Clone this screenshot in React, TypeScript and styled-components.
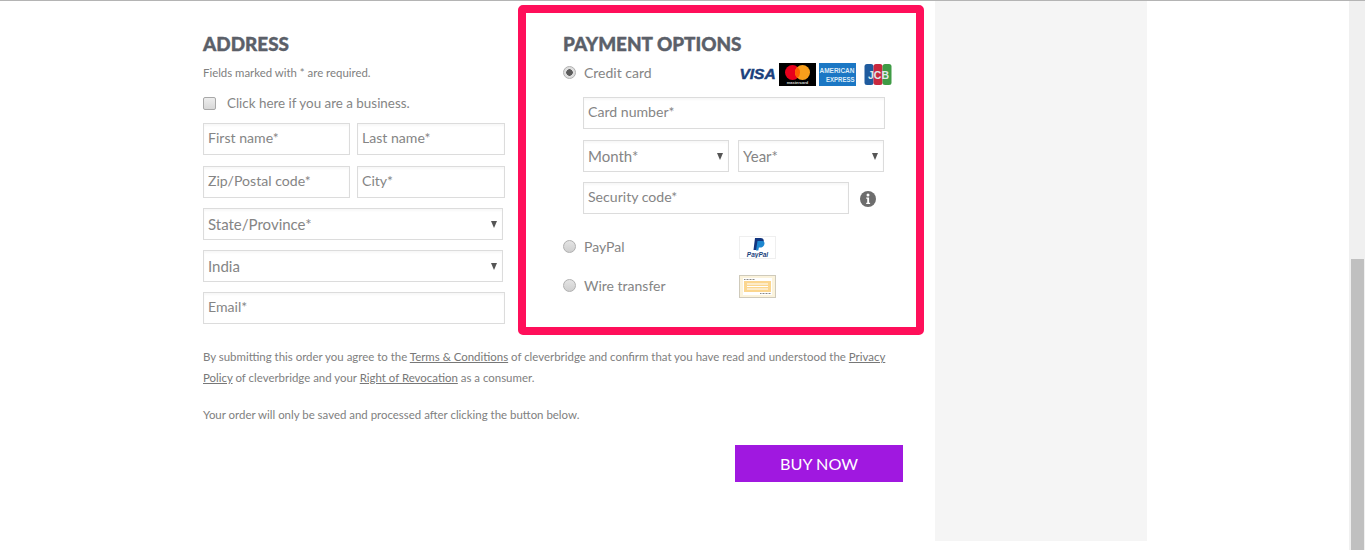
import styled, { createGlobalStyle } from "styled-components";

const GlobalStyle = createGlobalStyle`
  html, body {
    margin: 0;
    padding: 0;
    background: #fff;
    overflow: hidden;
  }
  * {
    box-sizing: border-box;
  }
`;

const App = () => {
  return (
    <>
      <GlobalStyle />
      <Page>
        <Content>
          <Main>
            <Columns>
              <AddressColumn>
                <Heading>ADDRESS</Heading>
                <Note>Fields marked with * are required.</Note>
                <BusinessRow>
                  <CheckBox />
                  <BusinessLabel>Click here if you are a business.</BusinessLabel>
                </BusinessRow>
                <Fields>
                  <FieldRow>
                    <TextField placeholder="First name*" />
                    <TextField placeholder="Last name*" />
                  </FieldRow>
                  <FieldRow>
                    <TextField placeholder="Zip/Postal code*" />
                    <TextField placeholder="City*" />
                  </FieldRow>
                  <SelectWrap width={300}>
                    <SelectField defaultValue="state">
                      <option value="state">State/Province*</option>
                    </SelectField>
                  </SelectWrap>
                  <SelectWrap width={300}>
                    <SelectField defaultValue="india">
                      <option value="india">India</option>
                    </SelectField>
                  </SelectWrap>
                  <TextField placeholder="Email*" />
                </Fields>
              </AddressColumn>

              <PaymentBox>
                <Heading>PAYMENT OPTIONS</Heading>
                <MethodRow>
                  <Radio checked />
                  <MethodLabel>Credit card</MethodLabel>
                  <CardLogos>
                    <VisaLogo />
                    <MastercardLogo />
                    <AmexLogo />
                    <JcbLogo />
                  </CardLogos>
                </MethodRow>
                <CardFields>
                  <CardNumberField placeholder="Card number*" />
                  <ExpiryRow>
                    <SelectWrap width={146}>
                      <SelectField defaultValue="month">
                        <option value="month">Month*</option>
                      </SelectField>
                    </SelectWrap>
                    <SelectWrap width={146}>
                      <SelectField defaultValue="year">
                        <option value="year">Year*</option>
                      </SelectField>
                    </SelectWrap>
                  </ExpiryRow>
                  <SecurityRow>
                    <SecurityField placeholder="Security code*" />
                    <InfoIcon />
                  </SecurityRow>
                </CardFields>
                <PayPalRow>
                  <Radio />
                  <MethodLabel>PayPal</MethodLabel>
                  <MethodLogo>
                    <PayPalLogo />
                  </MethodLogo>
                </PayPalRow>
                <WireRow>
                  <Radio />
                  <MethodLabel>Wire transfer</MethodLabel>
                  <MethodLogo>
                    <WireLogo />
                  </MethodLogo>
                </WireRow>
              </PaymentBox>
            </Columns>

            <Legal>
              By submitting this order you agree to the <LegalLink>Terms &amp; Conditions</LegalLink> of
              cleverbridge and confirm that you have read and understood the <LegalLink>Privacy Policy</LegalLink> of
              cleverbridge and your <LegalLink>Right of Revocation</LegalLink> as a consumer.
            </Legal>
            <SavedNote>Your order will only be saved and processed after clicking the button below.</SavedNote>
            <ButtonRow>
              <BuyButton>BUY NOW</BuyButton>
            </ButtonRow>
          </Main>
          <SidePanel />
        </Content>
        <ScrollTrack>
          <ScrollThumb />
        </ScrollTrack>
      </Page>
    </>
  );
};

export default App;

const VisaLogo = () => (
  <svg width="37" height="23" viewBox="0 0 37 23">
    <text
      x="18.5"
      y="16"
      textAnchor="middle"
      fontFamily="'Liberation Sans', sans-serif"
      fontWeight="700"
      fontStyle="italic"
      fontSize="15.5"
      stroke="#1a3f7c"
      strokeWidth="0.5"
      fill="#1a3f7c"
    >
      VISA
    </text>
  </svg>
);

const MastercardLogo = () => (
  <svg width="37" height="23" viewBox="0 0 37 23">
    <rect width="37" height="23" fill="#000" />
    <circle cx="13.500" cy="9.500" r="7.500" fill="#e8001c" />
    <circle cx="23.500" cy="9.500" r="7.500" fill="#f79e1b" />
    <path d="M18.500 3.900a7.500 7.500 0 0 1 0 11.200a7.500 7.500 0 0 1 0-11.200z" fill="#ff5f00" />
    <text
      x="18.500"
      y="21"
      textAnchor="middle"
      fontFamily="'Liberation Sans', sans-serif"
      fontWeight="700"
      fontSize="4"
      fill="#ddd"
    >
      mastercard
    </text>
  </svg>
);

const AmexLogo = () => (
  <svg width="37" height="23" viewBox="0 0 37 23">
    <rect width="37" height="23" fill="#1b77c4" />
    <text
      x="0.500"
      y="10"
      fontFamily="'Liberation Sans', sans-serif"
      fontWeight="700"
      fontSize="7"
      fill="#dcebf8"
      textLength="35"
      lengthAdjust="spacingAndGlyphs"
    >
      AMERICAN
    </text>
    <text
      x="7"
      y="18.500"
      fontFamily="'Liberation Sans', sans-serif"
      fontWeight="700"
      fontSize="7"
      fill="#dcebf8"
      textLength="28.500"
      lengthAdjust="spacingAndGlyphs"
    >
      EXPRESS
    </text>
  </svg>
);

const JcbLogo = () => (
  <svg width="28" height="23" viewBox="0 0 28 23">
    <rect x="0.500" y="1" width="9" height="21" rx="2.500" fill="#1f5b9e" />
    <rect x="9.500" y="1" width="9" height="21" rx="2.500" fill="#c9283e" />
    <rect x="18.500" y="1" width="9" height="21" rx="2.500" fill="#3f9b45" />
    <text
      x="4"
      y="16"
      fontFamily="'Liberation Sans', sans-serif"
      fontWeight="700"
      fontSize="10"
      fill="#dfe8ea"
      textLength="21"
      lengthAdjust="spacingAndGlyphs"
    >
      JCB
    </text>
  </svg>
);

const PayPalLogo = () => (
  <LogoFrame>
    <svg width="35" height="21" viewBox="0 0 35 21">
      <path d="M15 1h5.500c2.600 0 3.600 1.500 3.200 3.500-.5 2.700-2.300 4-4.700 4h-1.500l-.8 4.500h-3.200z" fill="#12357f" />
      <path d="M17.500 4h4.500c1.800 0 2.800 1 2.400 3-.5 2.500-2.200 3.500-4.200 3.500h-1.300l-.6 3h-2.300z" fill="#1d87d0" />
      <text
        x="17.500"
        y="19.500"
        textAnchor="middle"
        fontFamily="'Liberation Sans', sans-serif"
        fontWeight="700"
        fontStyle="italic"
        fontSize="6.500"
        fill="#1a3f7c"
      >
        PayPal
      </text>
    </svg>
  </LogoFrame>
);

const WireLogo = () => (
  <svg width="37" height="23" viewBox="0 0 37 23">
    <rect x="0.500" y="0.500" width="36" height="22" fill="#fbf3dc" stroke="#cfcabb" />
    <rect x="4" y="3" width="29" height="17" fill="#fff" />
    <rect x="5" y="6" width="27" height="11" fill="#fbd68e" />
    <path d="M8 9h21M8 11.500h21M8 14h21" stroke="#fff" strokeWidth="1" />
    <path d="M5 4.500h11M21 18.500h11" stroke="#888" strokeWidth="1" strokeDasharray="1 .5" />
  </svg>
);

const InfoIcon = () => (
  <svg width="16" height="16" viewBox="0 0 16 16">
    <circle cx="8" cy="8" r="8" fill="#6d6d6d" />
    <circle cx="8" cy="4" r="1.500" fill="#fff" />
    <path d="M6.200 6.500h2.900v5.200h1v1.300H6.200v-1.300h1V7.800h-1z" fill="#fff" />
  </svg>
);

const Page = styled.div`
  width: 1365px;
  height: 550px;
  display: flex;
  overflow: hidden;
  border-top: 1px solid #b4b4b4;
  font-family: "Lato", "Liberation Sans", sans-serif;
  color: #6f6f6f;
`;

const Content = styled.div`
  width: 1349px;
  display: flex;
  align-items: flex-start;
  padding-left: 203px;
`;

const Main = styled.div`
  width: 732px;
  display: flex;
  flex-direction: column;
`;

const Columns = styled.div`
  display: flex;
  padding-top: 4px;
`;

const AddressColumn = styled.div`
  width: 302px;
  margin-right: 13px;
  padding-top: 26px;
  display: flex;
  flex-direction: column;
`;

const Heading = styled.h2`
  margin: 0;
  font-size: 18.9px;
  line-height: 26px;
  font-weight: 900;
  color: #5b6069;
  -webkit-text-stroke: 0.4px #5b6069;
`;

const Note = styled.div`
  margin-top: 8px;
  font-size: 11.4px;
  line-height: 16px;
  color: #808080;
`;

const BusinessRow = styled.div`
  display: flex;
  align-items: center;
  margin-top: 14px;
  height: 16px;
`;

const CheckBox = styled.span`
  width: 13px;
  height: 13px;
  margin-right: 11px;
  border: 1px solid #a8a8a8;
  border-radius: 2px;
  background: linear-gradient(#ededed, #d8d8d8);
`;

const BusinessLabel = styled.span`
  font-size: 13.4px;
  color: #858585;
`;

const Fields = styled.div`
  margin-top: 12px;
  display: flex;
  flex-direction: column;
  gap: 10px;
`;

const FieldRow = styled.div`
  display: grid;
  grid-template-columns: 147px 148px;
  gap: 7px;

  &:first-child {
    margin-bottom: 1px;
  }
`;

const TextField = styled.input`
  display: block;
  width: 100%;
  min-width: 0;
  height: 32px;
  padding: 0 4px 3px;
  border: 1px solid #dcdcdc;
  box-shadow: inset 0 2px 2px rgba(0, 0, 0, 0.03);
  outline: none;
  background: #fff;
  font-family: inherit;
  font-size: 14.1px;
  color: #858585;

  &::placeholder {
    color: #858585;
    opacity: 1;
  }
`;

const SelectWrap = styled.div<{ width: number }>`
  position: relative;
  width: ${({ width }) => width}px;

  &::after {
    content: "";
    position: absolute;
    top: 13px;
    right: 6px;
    border-left: 3.5px solid transparent;
    border-right: 3.5px solid transparent;
    border-top: 7px solid #555;
    pointer-events: none;
  }
`;

const SelectField = styled.select`
  display: block;
  width: 100%;
  height: 32px;
  padding: 0 4px 1px;
  appearance: none;
  border: 1px solid #dcdcdc;
  border-radius: 0;
  box-shadow: inset 0 2px 2px rgba(0, 0, 0, 0.03);
  outline: none;
  background: #fff;
  font-family: inherit;
  font-size: 15px;
  color: #858585;
`;

const PaymentBox = styled.div`
  width: 406px;
  height: 330px;
  padding: 18px 30px 0 37px;
  border: 8px solid #ff0f5a;
  border-radius: 5px;
`;

const MethodRow = styled.div`
  display: flex;
  align-items: center;
  height: 23px;
  margin-top: 4px;
`;

const Radio = styled.span<{ checked?: boolean }>`
  flex: none;
  width: 13px;
  height: 13px;
  margin-right: 8px;
  border-radius: 50%;
  border: 1px solid #b0b0b0;
  background: ${({ checked }) =>
    checked
      ? "radial-gradient(circle, #5c5c5c 0 3px, #dedede 3.5px)"
      : "linear-gradient(#e4e4e4, #cfcfcf)"};
`;

const MethodLabel = styled.span`
  width: 155px;
  font-size: 14px;
  color: #858585;
`;

const CardLogos = styled.div`
  display: flex;
  gap: 3px;
  margin: 4px -6px 0 0;

  svg:last-child {
    margin-left: 5px;
  }
`;

const MethodLogo = styled.div`
  display: flex;
  margin-top: 2px;
`;

const CardFields = styled.div`
  margin: 13px 0 0 20px;
  display: flex;
  flex-direction: column;
  gap: 11px;
`;

const CardNumberField = styled(TextField)`
  width: 302px;
`;

const ExpiryRow = styled.div`
  display: flex;
  gap: 9px;
`;

const SecurityRow = styled.div`
  display: flex;
  align-items: center;
  gap: 11px;
  margin-top: -1px;

  svg {
    margin-top: 2px;
  }
`;

const SecurityField = styled(TextField)`
  width: 266px;
`;

const PayPalRow = styled(MethodRow)`
  margin-top: 21px;
`;

const WireRow = styled(MethodRow)`
  margin-top: 16px;
`;

const LogoFrame = styled.div`
  width: 37px;
  height: 23px;
  border: 1px solid #efefef;
`;

const Legal = styled.p`
  margin: 11px 0 0;
  width: 700px;
  font-size: 11.45px;
  line-height: 21px;
  color: #808080;
`;

const LegalLink = styled.a`
  text-decoration: underline;
  color: #777;
`;

const SavedNote = styled.p`
  margin: 16px 0 0;
  font-size: 11.45px;
  line-height: 21px;
  color: #808080;
`;

const ButtonRow = styled.div`
  margin-top: 20px;
  padding-right: 32px;
  display: flex;
  justify-content: flex-end;
`;

const BuyButton = styled.button`
  width: 168px;
  height: 37px;
  border: 0;
  background: #a018e0;
  color: #fff;
  font-family: inherit;
  font-size: 16.2px;
`;

const SidePanel = styled.div`
  width: 212px;
  height: 540px;
  background: #f5f5f5;
`;

const ScrollTrack = styled.div`
  width: 16px;
  height: 550px;
  padding: 258px 1px 0 2px;
  background: #f0f0f0;
`;

const ScrollThumb = styled.div`
  height: 292px;
  background: #c0c0c0;
`;
